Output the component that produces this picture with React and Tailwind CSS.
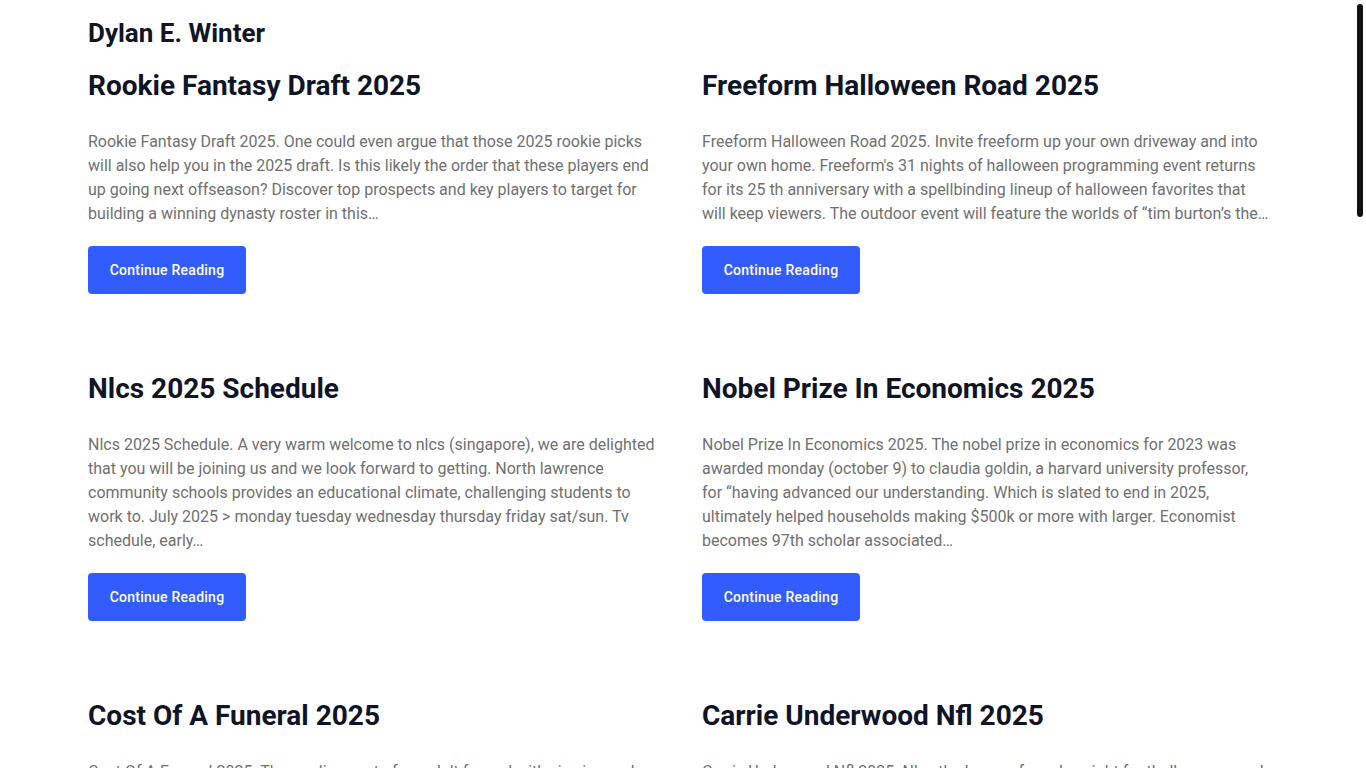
import React from "react";

const posts = [
  {
    title: "Rookie Fantasy Draft 2025",
    text: "Rookie Fantasy Draft 2025. One could even argue that those 2025 rookie picks will also help you in the 2025 draft. Is this likely the order that these players end up going next offseason? Discover top prospects and key players to target for building a winning dynasty roster in this…",
  },
  {
    title: "Freeform Halloween Road 2025",
    text: "Freeform Halloween Road 2025. Invite freeform up your own driveway and into your own home. Freeform's 31 nights of halloween programming event returns for its 25 th anniversary with a spellbinding lineup of halloween favorites that will keep viewers. The outdoor event will feature the worlds of “tim burton’s the…",
  },
  {
    title: "Nlcs 2025 Schedule",
    text: "Nlcs 2025 Schedule. A very warm welcome to nlcs (singapore), we are delighted that you will be joining us and we look forward to getting. North lawrence community schools provides an educational climate, challenging students to work to. July 2025 > monday tuesday wednesday thursday friday sat/sun. Tv schedule, early…",
  },
  {
    title: "Nobel Prize In Economics 2025",
    text: "Nobel Prize In Economics 2025. The nobel prize in economics for 2023 was awarded monday (october 9) to claudia goldin, a harvard university professor, for “having advanced our understanding. Which is slated to end in 2025, ultimately helped households making $500k or more with larger. Economist becomes 97th scholar associated…",
  },
  {
    title: "Cost Of A Funeral 2025",
    text: "Cost Of A Funeral 2025. The median cost of an adult funeral with viewing and burial is about $8,300, according to the national funeral directors association. Funeral costs vary widely depending on the services you choose and where you live…",
  },
  {
    title: "Carrie Underwood Nfl 2025",
    text: "Carrie Underwood Nfl 2025. Nbc, the home of sunday night football, announced that carrie underwood will return to sing the opening theme for the upcoming season. The country superstar has performed the song since 2013 and fans…",
  },
];

function Card({ title, text }) {
  return (
    <article className="flex flex-col items-start">
      <h2 className="text-[28px] leading-[34px] font-bold text-[#0f1426]">
        {title}
      </h2>
      <p className="mt-[27px] text-[16px] leading-6 text-[#707070]">{text}</p>
      <button className="mt-[20px] h-[48px] w-[158px] rounded-[4px] bg-[#335cff] text-[14px] font-medium tracking-[0.25px] text-white">
        Continue Reading
      </button>
    </article>
  );
}

export default function App() {
  return (
    <div className="relative h-screen overflow-hidden bg-white font-['Roboto',sans-serif]">
      <div className="mx-auto w-[1190px] pt-[17px]">
        <h1 className="text-[26px] leading-[32px] font-bold text-[#0f1426]">
          Dylan E. Winter
        </h1>
        <div className="mt-[20px] grid grid-cols-[568px_568px] gap-x-[46px] gap-y-[78px]">
          {posts.map((p) => (
            <Card key={p.title} {...p} />
          ))}
        </div>
      </div>
      <div className="absolute right-[3px] top-[4px] h-[213px] w-[6px] rounded-full bg-[#111111]" />
    </div>
  );
}
